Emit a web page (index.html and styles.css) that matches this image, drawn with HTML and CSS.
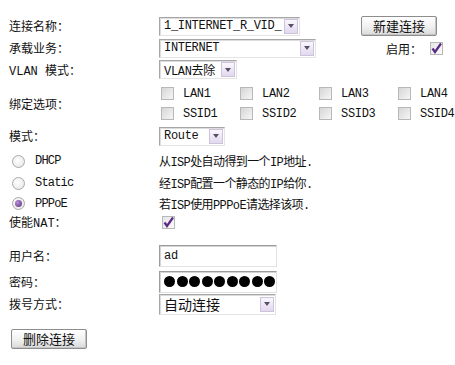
FILE: index.html
```html
<!DOCTYPE html>
<html lang="zh-CN">
<head>
<meta charset="utf-8">
<link rel="stylesheet" href="styles.css">
</head>
<body>
<div class="form">
  <div class="row h22 top">
    <div class="label">连接名称：</div>
    <div class="ctl">
      <div class="sel w141"><span class="val">1_INTERNET_R_VID_</span><span class="arrow"></span></div>
      <button class="btn btn-new">新建连接</button>
    </div>
  </div>
  <div class="row h22">
    <div class="label">承载业务：</div>
    <div class="ctl">
      <div class="sel w157"><span class="val">INTERNET</span><span class="arrow"></span></div>
      <span class="enable">启用：</span>
      <span class="cb checked"><svg viewBox="0 0 13 13" width="13" height="13"><path d="M2.5 6.5 L5 10 L11 1.5" fill="none" stroke="#5b2a86" stroke-width="2.2"/></svg></span>
    </div>
  </div>
  <div class="row h21">
    <div class="label">VLAN 模式：</div>
    <div class="ctl">
      <div class="sel w77"><span class="val">VLAN去除</span><span class="arrow"></span></div>
    </div>
  </div>
  <div class="row bind">
    <div class="label">绑定选项：</div>
    <div class="ctl grid">
      <span class="opt"><span class="cb"></span>LAN1</span>
      <span class="opt"><span class="cb"></span>LAN2</span>
      <span class="opt"><span class="cb"></span>LAN3</span>
      <span class="opt"><span class="cb"></span>LAN4</span>
      <span class="opt"><span class="cb"></span>SSID1</span>
      <span class="opt"><span class="cb"></span>SSID2</span>
      <span class="opt"><span class="cb"></span>SSID3</span>
      <span class="opt"><span class="cb"></span>SSID4</span>
    </div>
  </div>
  <div class="row h22">
    <div class="label">模式：</div>
    <div class="ctl">
      <div class="sel w65"><span class="val">Route</span><span class="arrow"></span></div>
    </div>
  </div>
  <div class="row h22 gap-top">
    <div class="label radio-l"><span class="radio"></span>DHCP</div>
    <div class="ctl desc">从ISP处自动得到一个IP地址.</div>
  </div>
  <div class="row h22">
    <div class="label radio-l"><span class="radio"></span>Static</div>
    <div class="ctl desc">经ISP配置一个静态的IP给你.</div>
  </div>
  <div class="row h19">
    <div class="label radio-l"><span class="radio on"></span>PPPoE</div>
    <div class="ctl desc">若ISP使用PPPoE请选择该项.</div>
  </div>
  <div class="row h18">
    <div class="label">使能NAT：</div>
    <div class="ctl"><span class="cb checked nat"><svg viewBox="0 0 13 13" width="13" height="13"><path d="M2.5 6.5 L5 10 L11 1.5" fill="none" stroke="#5b2a86" stroke-width="2.2"/></svg></span></div>
  </div>
  <div class="row h23 gap-user">
    <div class="label">用户名：</div>
    <div class="ctl"><div class="inp"><span class="val">ad</span></div></div>
  </div>
  <div class="row h23 gap-pw">
    <div class="label">密码：</div>
    <div class="ctl"><div class="inp dots"><span></span><span></span><span></span><span></span><span></span><span></span><span></span><span></span><span></span></div></div>
  </div>
  <div class="row h22">
    <div class="label">拨号方式：</div>
    <div class="ctl">
      <div class="sel w117 tall"><span class="val cn">自动连接</span><span class="arrow"></span></div>
    </div>
  </div>
  <div class="foot">
    <button class="btn">删除连接</button>
  </div>
</div>
</body>
</html>
```
FILE: styles.css
```css
html, body {
  margin: 0;
  padding: 0;
  background: #fff;
}
body {
  font-family: "Liberation Mono", "Noto Sans CJK SC", monospace;
  font-size: 12px;
  color: #111;
}
.form {
  width: 455px;
  padding-top: 15px;
  display: flex;
  flex-direction: column;
}
.row {
  display: grid;
  grid-template-columns: 150px 1fr;
  padding-left: 9px;
  align-items: center;
}
.h18 { height: 18px; }
.h19 { height: 19px; }
.h21 { height: 21px; }
.h22 { height: 22px; }
.h23 { height: 23px; }
.gap-top { margin-top: 3px; }
.gap-user { margin-top: 13px; }
.gap-pw { margin-top: 3px; }
.label {
  white-space: nowrap;
  display: flex;
  align-items: center;
}
.ctl {
  display: flex;
  align-items: center;
  white-space: nowrap;
}
.desc {
  letter-spacing: -0.6px;
}
.sel {
  box-sizing: border-box;
  height: 19px;
  border: 1px solid;
  border-color: #a7a7a7 #e4e4e4 #e4e4e4 #a7a7a7;
  box-shadow: inset 1px 1px 0 #dcdcdc;
  display: flex;
  align-items: center;
  justify-content: space-between;
  padding: 0 1px 0 4px;
  background: #fff;
}
.sel.tall { height: 21px; }
.w141 { width: 141px; }
.w157 { width: 157px; }
.w77 { width: 78px; }
.w65 { width: 66px; }
.w117 { width: 117px; }
.val {
  letter-spacing: -0.3px;
}
.val.cn {
  font-family: "Noto Sans CJK SC", sans-serif;
  font-size: 14px;
  letter-spacing: 0;
}
.arrow {
  box-sizing: border-box;
  width: 14px;
  height: 15px;
  border: 1px solid #cdc3df;
  background: linear-gradient(#faf7fd, #e2d8ee);
  display: flex;
  align-items: center;
  justify-content: center;
}
.arrow::after {
  content: "";
  border-top: 4px solid #555068;
  border-left: 3px solid transparent;
  border-right: 3px solid transparent;
}
.btn {
  box-sizing: border-box;
  width: 76px;
  height: 20px;
  border: 1px solid #8d8d8d;
  border-radius: 2px;
  background: linear-gradient(#ffffff, #f0f0f0 55%, #d9d9d9);
  font-family: "Noto Sans CJK SC", sans-serif;
  font-size: 13px;
  line-height: 16px;
  color: #111;
  padding: 0;
  box-shadow: inset -1px -1px 0 #c4c4c4;
}
.btn-new {
  margin-left: auto;
  margin-right: 18px;
}
.enable {
  margin-left: auto;
  margin-right: 8px;
  font-family: "Noto Sans CJK SC", sans-serif;
}
.cb {
  box-sizing: border-box;
  width: 13px;
  height: 13px;
  border: 1px solid #b8b8b8;
  background: linear-gradient(135deg, #d6d6d6, #f6f6f6);
  display: inline-flex;
  flex: none;
  position: relative;
}
.cb.checked {
  background: linear-gradient(135deg, #e6e6e6, #fbfbfb);
  margin-right: 12px;
}
.cb svg {
  position: absolute;
  left: -1px;
  top: -1px;
}
.cb.nat {
  margin-left: 3px;
}
.bind {
  height: 43px;
  margin-top: 2px;
}
.grid {
  display: grid;
  grid-template-columns: repeat(4, 79px);
  grid-auto-rows: 20px;
  align-content: center;
  align-items: center;
}
.opt {
  display: flex;
  align-items: center;
  padding-left: 2px;
  gap: 9px;
  letter-spacing: -0.3px;
}
.radio-l {
  padding-left: 3px;
  gap: 10px;
  letter-spacing: -0.8px;
}
.radio {
  box-sizing: border-box;
  width: 13px;
  height: 13px;
  border-radius: 50%;
  border: 1px solid #a9a9a9;
  background: radial-gradient(circle at 40% 40%, #ffffff, #e2e2e2);
  display: inline-flex;
  align-items: center;
  justify-content: center;
  flex: none;
}
.radio.on::after {
  content: "";
  width: 7px;
  height: 7px;
  border-radius: 50%;
  background: radial-gradient(circle at 35% 35%, #b58fd2, #5c2c86);
}
.inp {
  box-sizing: border-box;
  width: 118px;
  height: 22px;
  border: 1px solid;
  border-color: #9c9c9c #e2e2e2 #e2e2e2 #9c9c9c;
  box-shadow: inset 1px 1px 0 #d4d4d4;
  display: flex;
  align-items: center;
  padding-left: 4px;
}
.dots {
  gap: 1.5px;
}
.dots span {
  width: 11px;
  height: 11px;
  border-radius: 50%;
  background: #000;
}
.foot {
  padding-left: 11px;
  margin-top: 14px;
}
```
